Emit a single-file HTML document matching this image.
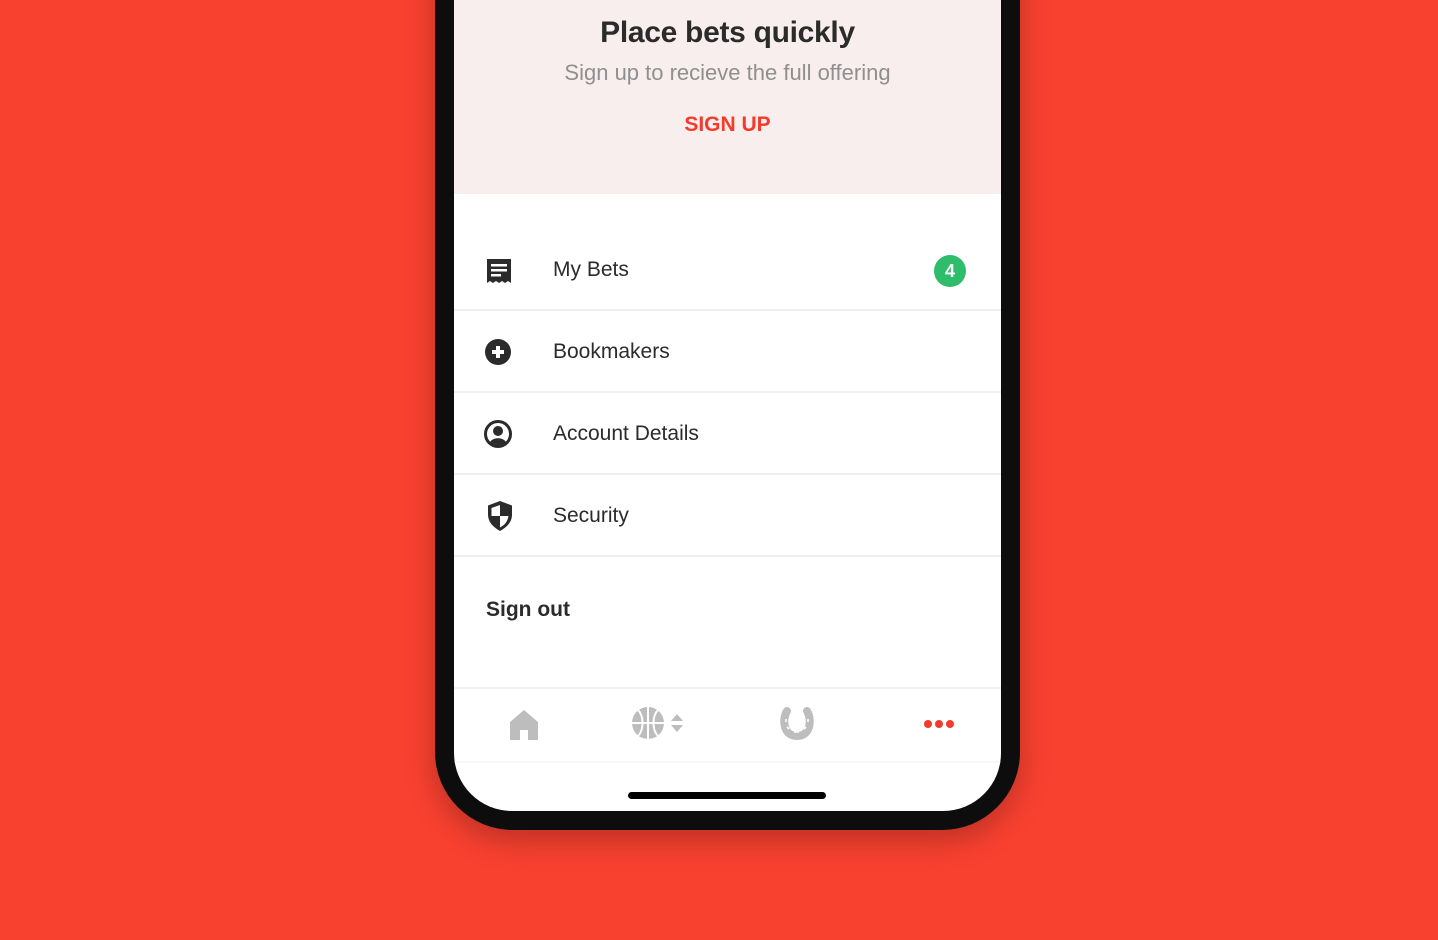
<!DOCTYPE html>
<html><head><meta charset="utf-8"><style>
*{margin:0;padding:0;box-sizing:border-box}
body{width:1438px;height:940px;background:#f94130;position:relative;overflow:hidden;font-family:"Liberation Sans",sans-serif}
.phone{position:absolute;left:435px;top:-80px;width:585px;height:910px;background:#0d0d0d;border-radius:0 0 78px 78px;box-shadow:0 10px 30px rgba(0,0,0,.25)}
.screen{position:absolute;left:454px;top:0;width:547px;height:811px;background:#fff;border-radius:0 0 58px 58px;overflow:hidden}
.top{height:194px;background:#f8eeed;text-align:center}
.t1{position:absolute;top:16px;width:100%;font-size:30px;font-weight:bold;color:#2b2b2b;letter-spacing:-0.3px}
.t2{position:absolute;top:60px;width:100%;font-size:22px;color:#8f8f8f}
.t3{position:absolute;top:113px;width:100%;font-size:21px;font-weight:bold;color:#f43b2b}
.row{position:absolute;left:0;width:547px;height:82px;border-bottom:2px solid #f0f0f0}
.row svg{position:absolute;left:30px;top:27px}
.row span{position:absolute;left:99px;top:29px;font-size:21px;color:#2b2b2b}
.badge{position:absolute;left:480px;top:255px;width:32px;height:32px;border-radius:50%;background:#2ebd6b;color:#fff;font-size:18px;font-weight:bold;text-align:center;line-height:32px}
.so{position:absolute;left:32px;top:598px;font-size:21px;font-weight:bold;color:#2b2b2b}
.tab{position:absolute;top:687px;left:0;width:547px;height:76px;border-top:2px solid #f2f2f2;border-bottom:2px solid #f7f7f7}
.home{position:absolute;left:174px;top:792px;width:198px;height:7px;border-radius:4px;background:#000}
</style></head><body>
<div class="phone"></div>
<div class="screen">
<div class="top"><div class="t1">Place bets quickly</div><div class="t2">Sign up to recieve the full offering</div><div class="t3">SIGN UP</div></div>
<div class="row" style="top:229px"><svg width="30" height="30" viewBox="0 0 30 30"><path d="M3 3h24v24l-3-2-3 2-3-2-3 2-3-2-3 2-3-2-3 2z" fill="#2b2b2b"/><rect x="7" y="8" width="16" height="2.5" fill="#fff"/><rect x="7" y="13" width="16" height="2.5" fill="#fff"/><rect x="7" y="18" width="10" height="2.5" fill="#fff"/></svg><span>My Bets</span></div>
<div class="row" style="top:311px"><svg width="30" height="30" viewBox="0 0 30 30"><circle cx="14" cy="14" r="13" fill="#2b2b2b"/><path d="M14 8v12M8 14h12" stroke="#fff" stroke-width="4"/></svg><span>Bookmakers</span></div>
<div class="row" style="top:393px"><svg width="30" height="30" viewBox="0 0 30 30"><circle cx="14" cy="14" r="12.5" fill="none" stroke="#2b2b2b" stroke-width="3"/><circle cx="14" cy="11" r="5" fill="#2b2b2b"/><path d="M6 22c3-5 13-5 16 0c-4 4-12 4-16 0z" fill="#2b2b2b"/></svg><span>Account Details</span></div>
<div class="row" style="top:475px"><svg style="left:32px;top:25px" width="28" height="32" viewBox="0 0 28 32"><path d="M14 1l12 4.5v9C26 22 21 27 14 31 7 27 2 22 2 14.5v-9z" fill="#2b2b2b"/><path d="M14 5v11H5.5V8zM14 16h8.5c-1 6-4 9-8.5 11.5z" fill="#fff"/></svg><span>Security</span></div>
<div class="badge">4</div>
<div class="so">Sign out</div>
<div class="tab">
<svg style="position:absolute;left:54px;top:20px" width="32" height="32" viewBox="0 0 32 32"><path d="M16 1L2 13v18h10v-10h8v10h10V13z" fill="#bdbdbd"/></svg>
<svg style="position:absolute;left:178px;top:18px" width="56" height="34" viewBox="0 0 56 34"><circle cx="16" cy="16" r="16" fill="#bdbdbd"/><path d="M16 0v32M0 16h32M6 3c6 6 6 20 0 26M26 3c-6 6-6 20 0 26" stroke="#fff" stroke-width="2" fill="none"/><path d="M39 14l6-7 6 7zM39 18l6 7 6-7z" fill="#bdbdbd"/></svg>
<svg style="position:absolute;left:325px;top:18px" width="36" height="34" viewBox="0 0 36 34"><path d="M8 4C3 12 4 29 18 29S33 12 28 4" stroke="#bdbdbd" stroke-width="8" fill="none" stroke-linecap="round"/><path d="M7 12v3M8 20l2 2M15 25h5M25 22l2-2M29 15v-3" stroke="#fff" stroke-width="1.6"/></svg>
<svg style="position:absolute;left:470px;top:30px" width="32" height="10" viewBox="0 0 32 10"><circle cx="4" cy="5" r="4" fill="#f43b2b"/><circle cx="15" cy="5" r="4" fill="#f43b2b"/><circle cx="26" cy="5" r="4" fill="#f43b2b"/></svg>
</div>
<div class="home"></div>
</div>
</body></html>
